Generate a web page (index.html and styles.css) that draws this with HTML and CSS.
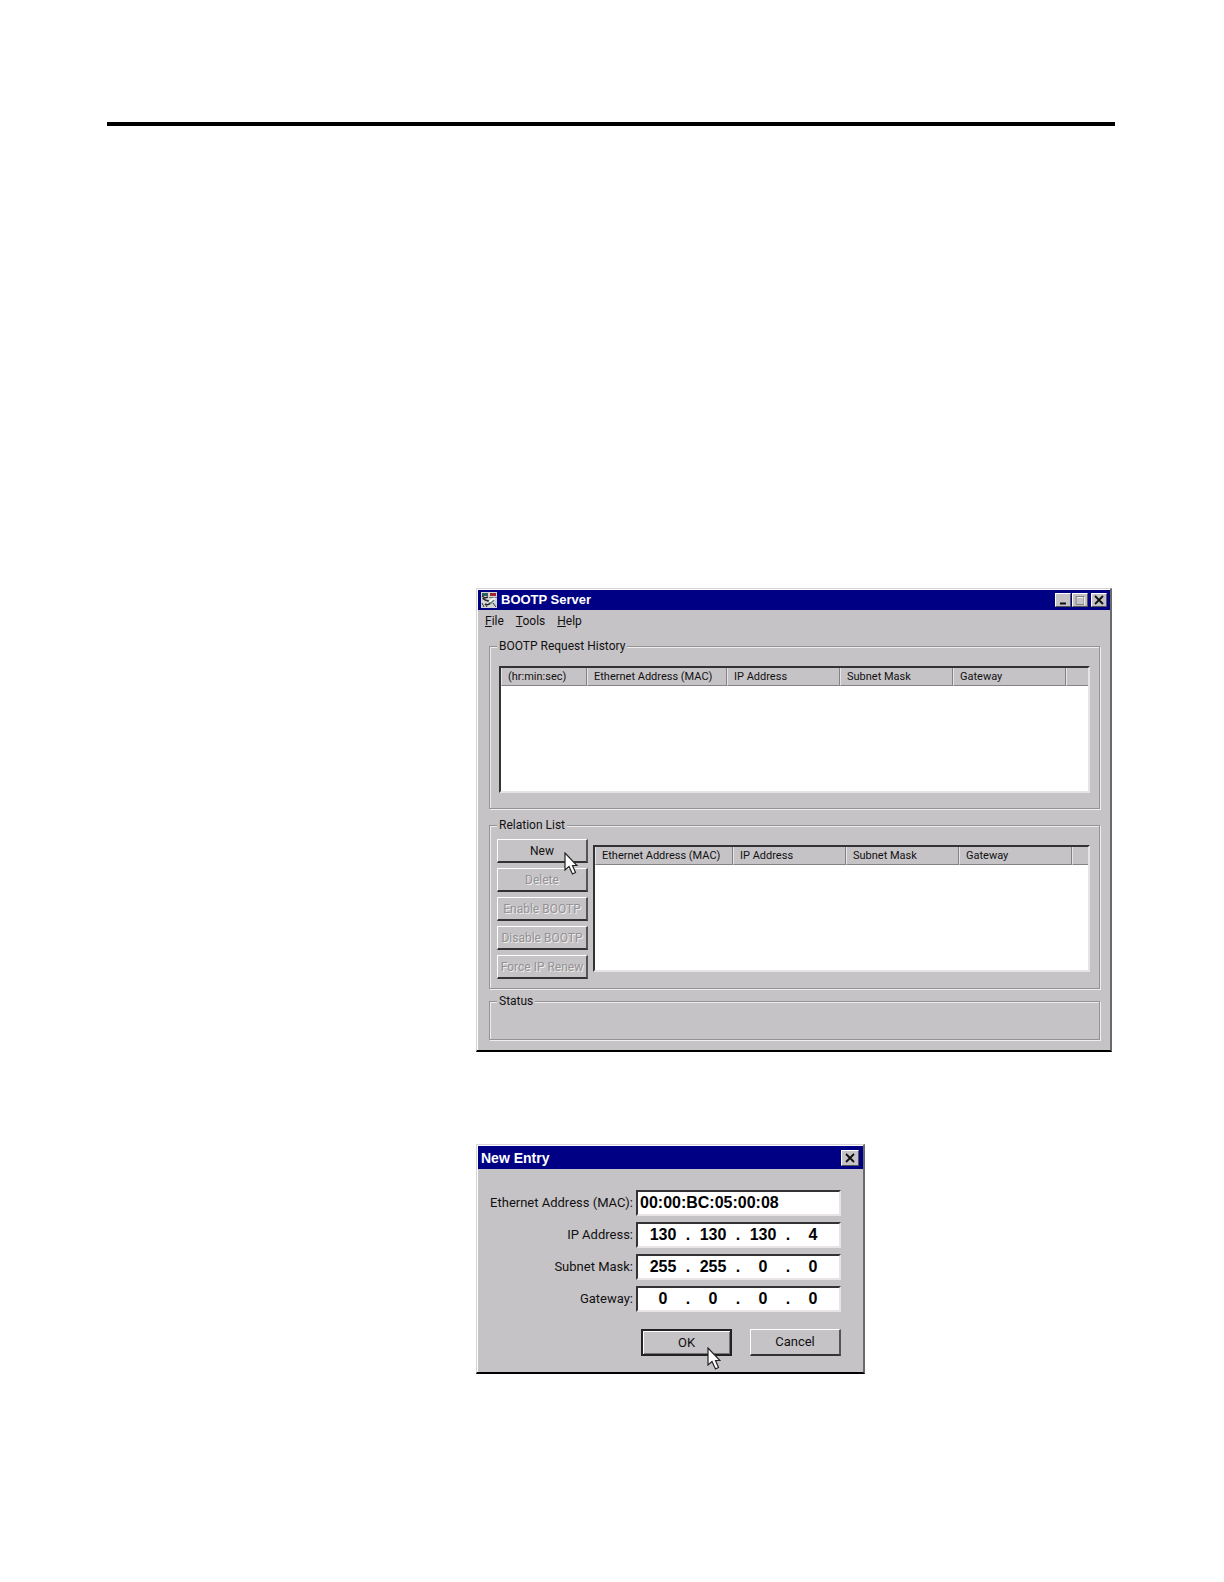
FILE: index.html
```html
<!DOCTYPE html>
<html lang="en">
<head>
<meta charset="utf-8">
<title>BOOTP Server</title>
<link rel="stylesheet" href="styles.css">
</head>
<body>
<svg class="defs" aria-hidden="true">
  <symbol id="pointer" viewBox="0 0 14 24">
    <path d="M1 1V18L5 14.500L8.500 22L11.500 20.500L8.500 13.500H13Z" fill="#fff" stroke="#222" stroke-width="1.200"/>
  </symbol>
  <symbol id="close" viewBox="0 0 10 10">
    <path d="M1 1L9 9M9 1L1 9" stroke="#111" stroke-width="1.800"/>
  </symbol>
</svg>
<main class="page">
  <hr class="rule">
  <div class="figures">
    <section class="window" aria-labelledby="server-title">
      <header class="titlebar">
        <svg class="app-icon" viewBox="0 0 16 16" aria-hidden="true">
          <rect width="16" height="16" fill="#d4d6d6"/>
          <rect x="1" y="1" width="6" height="3" fill="#31605c"/>
          <rect x="9" y="1" width="6" height="3" fill="#a52230"/>
          <path d="M8 5.500H16" stroke="#777"/>
          <path d="M1 4L4 6L7 5M2 6C2 9 10 8 9 11C8 13 6 13 4 12" fill="none" stroke="#222" stroke-width="1.500"/>
          <path d="M8 10L14 6" stroke="#fff" stroke-width="2"/>
          <path d="M9 12L13 8" stroke="#55827c" stroke-width="1.500"/>
          <path d="M1 11L3 15M4 12L6 15M12 11L15 15" fill="none" stroke="#333"/>
        </svg>
        <h1 class="title" id="server-title">BOOTP Server</h1>
        <div class="caption-buttons">
          <button class="caption" type="button" aria-label="Minimize"><svg viewBox="0 0 10 10"><path d="M2 8.500H8" stroke="#111" stroke-width="2"/></svg></button>
          <button class="caption" type="button" aria-label="Maximize" disabled><svg viewBox="0 0 10 10"><path d="M1 1.500H9V9.500H1Z" fill="none" stroke="#848284"/><path d="M2 2.500H8M9.500 2V10" stroke="#eee"/></svg></button>
          <button class="caption caption-close" type="button" aria-label="Close"><svg><use href="#close"/></svg></button>
        </div>
      </header>
      <nav class="menu">
        <a href="#file"><u>F</u>ile</a>
        <a href="#tools"><u>T</u>ools</a>
        <a href="#help"><u>H</u>elp</a>
      </nav>
      <div class="groups">
        <fieldset class="group history">
          <legend>BOOTP Request History</legend>
          <div class="list">
            <table>
              <colgroup><col class="col-time"><col class="col-mac"><col class="col-ip"><col class="col-ip"><col class="col-ip"><col></colgroup>
              <thead><tr><th>(hr:min:sec)</th><th>Ethernet Address (MAC)</th><th>IP Address</th><th>Subnet Mask</th><th>Gateway</th><td></td></tr></thead>
            </table>
          </div>
        </fieldset>
        <fieldset class="group relations">
          <legend>Relation List</legend>
          <div class="relation-row">
            <div class="actions">
              <button class="button" type="button">New<svg class="pointer pointer-new" aria-hidden="true"><use href="#pointer"/></svg></button>
              <button class="button" type="button" disabled>Delete</button>
              <button class="button" type="button" disabled>Enable BOOTP</button>
              <button class="button" type="button" disabled>Disable BOOTP</button>
              <button class="button" type="button" disabled>Force IP Renew</button>
            </div>
            <div class="list">
              <table>
                <colgroup><col class="col-mac"><col class="col-ip"><col class="col-ip"><col class="col-ip"><col></colgroup>
                <thead><tr><th>Ethernet Address (MAC)</th><th>IP Address</th><th>Subnet Mask</th><th>Gateway</th><td></td></tr></thead>
              </table>
            </div>
          </div>
        </fieldset>
        <fieldset class="group status">
          <legend>Status</legend>
        </fieldset>
      </div>
    </section>

    <section class="window dialog" aria-labelledby="entry-title">
      <header class="titlebar">
        <h2 class="title" id="entry-title">New Entry</h2>
        <div class="caption-buttons">
          <button class="caption" type="button" aria-label="Close"><svg><use href="#close"/></svg></button>
        </div>
      </header>
      <form class="entry">
        <label for="mac">Ethernet Address (MAC):</label>
        <input class="field mac" id="mac" value="00:00:BC:05:00:08">
        <label for="ip">IP Address:</label>
        <div class="field octets">
          <input id="ip" value="130"><span>.</span><input aria-label="IP octet 2" value="130"><span>.</span><input aria-label="IP octet 3" value="130"><span>.</span><input aria-label="IP octet 4" value="4">
        </div>
        <label for="mask">Subnet Mask:</label>
        <div class="field octets">
          <input id="mask" value="255"><span>.</span><input aria-label="Mask octet 2" value="255"><span>.</span><input aria-label="Mask octet 3" value="0"><span>.</span><input aria-label="Mask octet 4" value="0">
        </div>
        <label for="gateway">Gateway:</label>
        <div class="field octets">
          <input id="gateway" value="0"><span>.</span><input aria-label="Gateway octet 2" value="0"><span>.</span><input aria-label="Gateway octet 3" value="0"><span>.</span><input aria-label="Gateway octet 4" value="0">
        </div>
        <div class="entry-actions">
          <button class="button default" type="button">OK<svg class="pointer pointer-ok" aria-hidden="true"><use href="#pointer"/></svg></button>
          <button class="button" type="button">Cancel</button>
        </div>
      </form>
    </section>
  </div>
</main>
</body>
</html>
```
FILE: styles.css
```css
:root {
  --face: #c6c3c6;
  --shade: #848284;
  --dark: #333;
  --navy: #000084;
}

* { box-sizing: border-box; }

body {
  margin: 0;
  background: #fff;
  color: #111;
  font: 12px/16px Roboto, "Liberation Sans", Arial, sans-serif;
}

button, input { font: inherit; color: inherit; }

.defs { display: none; }

.page { padding: 122px 109px 208px 107px; }

.rule {
  height: 4px;
  margin: 0;
  border: 0;
  background: #000;
}

.figures {
  display: flex;
  flex-direction: column;
  gap: 92px;
  margin: 462px 3px 0 369px;
}

.window {
  padding: 1px 0 0 1px;
  background: var(--face);
  border: 1px solid #d6d3d6;
  border-right: 2px solid #6b696b;
  border-bottom: 2px solid #000;
  box-shadow: inset 1px 1px 0 #fff;
}

.titlebar {
  display: flex;
  align-items: center;
  gap: 4px;
  height: 20px;
  padding: 0 3px 0 3px;
  background: var(--navy);
  color: #fff;
}

.app-icon { width: 16px; height: 16px; }

.title {
  flex: 1;
  margin: 0;
  font-family: "Liberation Sans", Arial, sans-serif;
  font-size: 13px;
  line-height: 16px;
}

.caption-buttons { display: flex; gap: 1px; }

.caption {
  display: grid;
  place-items: center;
  width: 16px;
  height: 14px;
  padding: 0;
  background: var(--face);
  border: 1px solid #fff;
  border-right-color: #555;
  border-bottom-color: #555;
}

.caption svg { width: 10px; height: 10px; }

.caption-close { margin-left: 2px; }

.menu {
  display: flex;
  gap: 12px;
  padding: 3px 7px 9px;
}

.menu a { color: inherit; text-decoration: none; }

.groups { padding: 0 10px 10px 11px; }

.group {
  min-width: 0;
  margin: 0;
  padding: 0 9px;
  border: 1px solid #949294;
  box-shadow: 1px 1px 0 #eee, inset 1px 1px 0 #eee;
}

.group legend {
  margin-left: -2px;
  padding: 0 2px;
  background: var(--face);
}

.history { padding-top: 12px; padding-bottom: 15px; }

.relations { margin: 8px 0 4px; padding: 6px 9px 9px 7px; }

.relations legend { margin-left: 0; }

.status { height: 47px; }

.list {
  min-width: 0;
  height: 127px;
  background: #fff;
  border: 2px solid var(--dark);
  border-right-color: #e7e3e7;
  border-bottom-color: #e7e3e7;
}

.list table {
  width: 100%;
  table-layout: fixed;
  border-collapse: separate;
  border-spacing: 0;
}

.list th, .list td {
  height: 18px;
  padding: 0 0 0 6px;
  background: var(--face);
  border: 1px solid #e7e3e7;
  border-top: 0;
  border-right-color: var(--shade);
  border-bottom-color: var(--shade);
  font-size: 11px;
  font-weight: 400;
  line-height: 16px;
  text-align: left;
  white-space: nowrap;
}

.list td { border-right: 0; }

.col-time { width: 86px; }
.col-mac { width: 140px; }
.col-ip { width: 113px; }

.relation-row { display: flex; gap: 5px; }

.relation-row .list { flex: 1; margin-top: 6px; }

.relation-row .col-mac { width: 138px; }

.actions {
  display: flex;
  flex-direction: column;
  gap: 5px;
}

.button {
  position: relative;
  width: 91px;
  height: 24px;
  padding: 0;
  background: var(--face);
  border: 1px solid #fff;
  border-right: 2px solid #555;
  border-bottom: 2px solid #333;
}

.button:disabled { color: #949294; text-shadow: 1px 1px 0 #eee; }

.pointer {
  position: absolute;
  z-index: 1;
  width: 14px;
  height: 24px;
}

.pointer-new { left: 66px; top: 12px; }
.pointer-ok { left: 64px; top: 16px; }

.dialog { width: 389px; max-width: 100%; font-size: 13px; }

.dialog .titlebar { height: 23px; padding-right: 4px; }

.dialog .title { font-size: 14px; }

.dialog .caption { width: 18px; height: 16px; }

.entry {
  display: grid;
  grid-template-columns: 1fr 205px;
  align-items: center;
  gap: 6px 3px;
  padding: 21px 22px 16px 10px;
}

.entry label { text-align: right; }

.field {
  width: 100%;
  height: 26px;
  background: #fff;
  border: 2px solid var(--dark);
  border-right-color: #e7e3e7;
  border-bottom-color: #e7e3e7;
  border-radius: 0;
  color: #000;
  font-family: "Liberation Sans", Arial, sans-serif;
  font-size: 16px;
  font-weight: 700;
  line-height: 20px;
}

.mac { padding: 0 2px; }

.octets {
  display: flex;
  align-items: center;
  padding: 0 7px 0 6px;
}

.octets input {
  flex: 1;
  min-width: 0;
  height: 20px;
  padding: 0;
  border: 0;
  background: none;
  text-align: center;
}

.octets span { width: 12px; text-align: center; }

.entry-actions {
  display: flex;
  grid-column: 1 / -1;
  justify-content: flex-end;
  gap: 18px;
  margin-top: 11px;
}

.entry-actions .button { height: 27px; }

.entry-actions .default {
  border: 2px solid #222;
  box-shadow: inset 1px 1px 0 #fff, inset -1px -1px 0 #777;
}
```
